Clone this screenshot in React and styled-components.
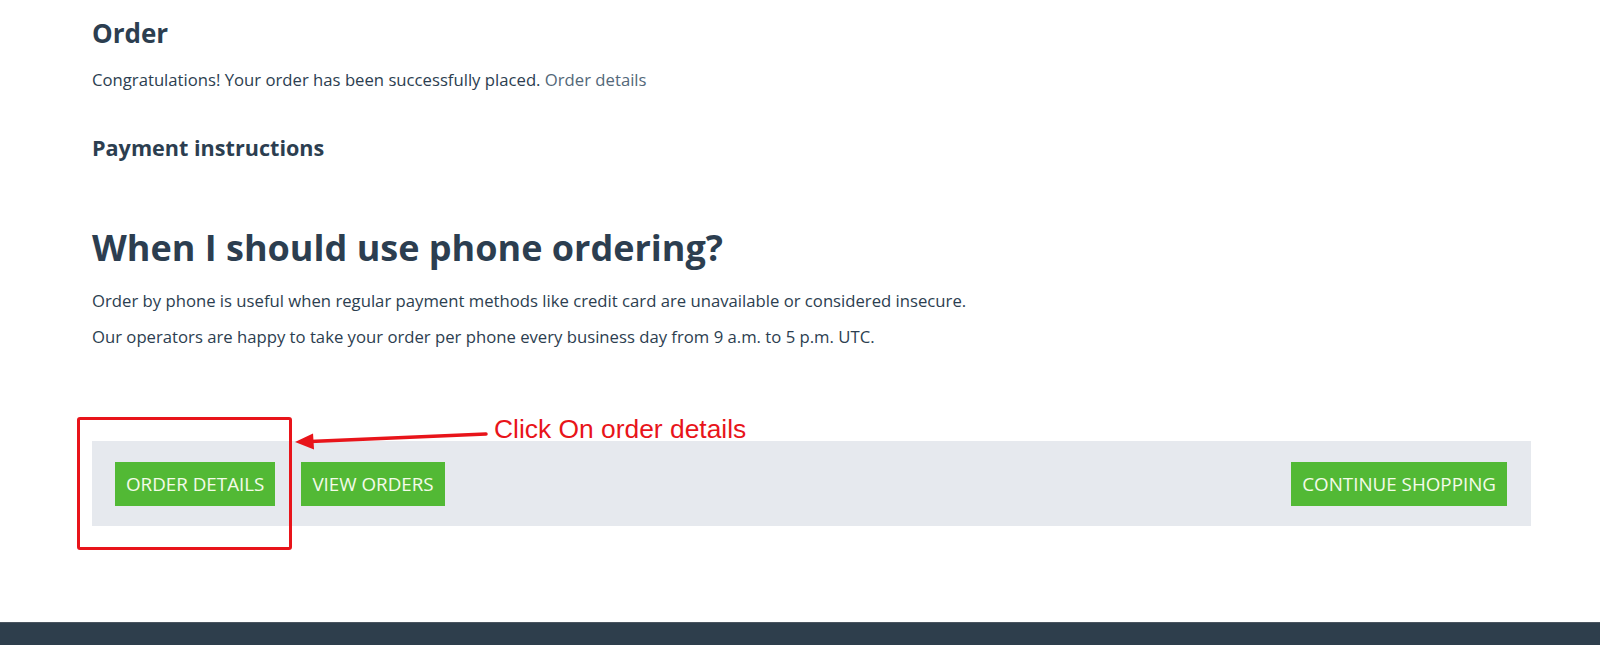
import React from 'react';
import styled, { createGlobalStyle } from 'styled-components';

const GlobalStyle = createGlobalStyle`
    body {
        margin: 0;
        font-family: 'Open Sans', 'Noto Sans', sans-serif;
        color: #2c3e50;
        background: #ffffff;
    }
`

const Page = styled.div`
    position: relative;
    display: flex;
    flex-direction: column;
    height: 645px;
    overflow: hidden;
`

const Main = styled.main`
    padding: 0 69px 0 92px;
`

const PageTitle = styled.h1`
    margin: 18px 0 0 0;
    font-size: 26px;
    line-height: 30px;
    font-weight: 700;
    color: #2c3e50;
`

const Text = styled.p`
    margin: ${props => props.top || 0}px 0 0 0;
    font-size: 16.7px;
    line-height: 24px;
    color: #2c3e50;
`

const Link = styled.a`
    color: #536879;
    text-decoration: none;
`

const SubTitle = styled.h3`
    margin: 42px 0 0 0;
    font-size: 21.6px;
    line-height: 28px;
    font-weight: 700;
    color: #2c3e50;
`

const BigTitle = styled.h2`
    margin: 64px 0 0 0;
    font-size: 36px;
    line-height: 44px;
    font-weight: 700;
    color: #2c3e50;
`

const ButtonBar = styled.div`
    display: flex;
    align-items: center;
    gap: 26px;
    margin-top: 92px;
    padding: 21px 24px 20px 23px;
    background: #e6e9ee;
`

const Spacer = styled.div`
    flex: 1;
`

const GreenButton = styled.button`
    height: 44px;
    padding: 0 11px;
    border: 0;
    background: #52b935;
    color: #f4fbe9;
    font-family: 'Open Sans', sans-serif;
    font-size: 18.8px;
    text-transform: uppercase;
    cursor: pointer;
`

const Footer = styled.footer`
    margin-top: auto;
    height: 22px;
    background: #2e3e4c;
    border-top: 1px solid #4a5560;
`

const Highlight = styled.div`
    position: absolute;
    left: 77px;
    top: 417px;
    width: 209px;
    height: 127px;
    border: 3px solid #e8141a;
    border-radius: 3px;
`

const Note = styled.div`
    position: absolute;
    left: 494px;
    top: 414px;
    font-family: 'Liberation Sans', Arial, sans-serif;
    font-size: 26.4px;
    line-height: 30px;
    color: #e8141a;
`

const Arrow = styled.svg`
    position: absolute;
    left: 292px;
    top: 425px;
`

const App = () => {
    return (
        <Page>
            <GlobalStyle />
            <Main>
                <PageTitle>Order</PageTitle>
                <Text top={20}>
                    Congratulations! Your order has been successfully placed. <Link href="#">Order details</Link>
                </Text>
                <SubTitle>Payment instructions</SubTitle>
                <BigTitle>When I should use phone ordering?</BigTitle>
                <Text top={19}>
                    Order by phone is useful when regular payment methods like credit card are unavailable or considered insecure.
                </Text>
                <Text top={12}>
                    Our operators are happy to take your order per phone every business day from 9 a.m. to 5 p.m. UTC.
                </Text>
                <ButtonBar>
                    <GreenButton>Order details</GreenButton>
                    <GreenButton>View orders</GreenButton>
                    <Spacer />
                    <GreenButton>Continue shopping</GreenButton>
                </ButtonBar>
            </Main>
            <Footer />

            <Highlight />
            <Arrow width="196" height="26" viewBox="0 0 196 26">
                <line x1="194" y1="9" x2="18" y2="16.5" stroke="#e8141a" strokeWidth="3.5" strokeLinecap="round" />
                <polygon points="3,17 21,8.5 22,24.5" fill="#e8141a" />
            </Arrow>
            <Note>Click On order details</Note>
        </Page>
    );
}

export default App;
